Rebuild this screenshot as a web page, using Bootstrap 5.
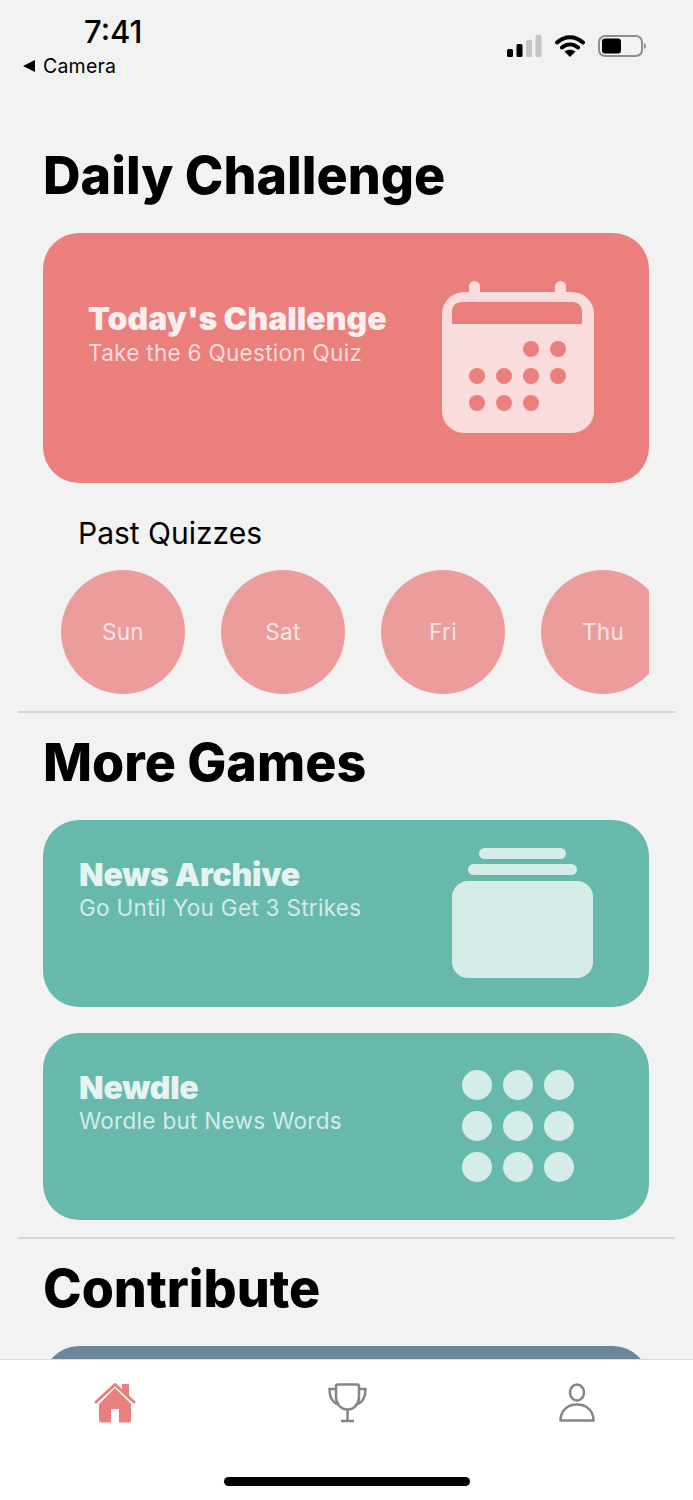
<!DOCTYPE html>
<html lang="en">
<head>
<meta charset="UTF-8">
<meta name="viewport" content="width=device-width, initial-scale=1.0">
<title>Daily Challenge</title>
<link href="https://cdn.jsdelivr.net/npm/bootstrap@5.3.0/dist/css/bootstrap.min.css" rel="stylesheet">
<style>
html, body { height: 100%; }
body { background: #f2f2f2; font-family: Inter, "Liberation Sans", sans-serif; color: #000; overflow: hidden; }
.phone { position: relative; width: 693px; height: 1500px; overflow: hidden; }
.status-bar { height: 100px; padding: 14px 47px 0 23px; }
.clock { font-size: 31px; line-height: 36px; font-weight: 500; margin-left: 61px; }
.back-link { font-size: 19.5px; line-height: 24px; margin-top: 4px; letter-spacing: .2px; }
.status-icons { margin-top: 21px; gap: 13px; }
.section-title { font-size: 52px; line-height: 60px; font-weight: 800; margin: 0 0 0 43px; }
.title-first { margin-top: 46px; margin-bottom: 27px; }
.title-next { margin-top: 20px; margin-bottom: 27px; }
.promo { margin: 0 44px 0 43px; border-radius: 36px; color: #fff; }
.promo-red { background: #ea7f7c; height: 250px; padding: 67px 55px 0 45px; }
.promo-teal { background: #67b9ae; height: 187px; padding: 36px 56px 0 36px; margin-bottom: 26px; }
.promo-blue { background: #6b8799; height: 100px; }
.promo-title { font-size: 32px; line-height: 38px; font-weight: 900; color: #fbeeee; }
.promo-teal .promo-title { color: #e6f4f1; letter-spacing: -.25px; }
.promo-sub { font-size: 22.5px; line-height: 28px; letter-spacing: .3px; }
.promo-red .promo-sub { color: #fbdcdc; margin-top: 1px; }
.promo-teal .promo-sub { color: #d3ece7; margin-top: 0; }
.icon-calendar { margin-top: -19px; }
.icon-archive { margin-top: -8px; }
.icon-grid { margin-top: 1px; margin-right: 18px; }
.past-label { font-size: 30px; line-height: 38px; margin: 31px 0 18px 78px; }
.circle-row { margin: 0 44px 0 61px; gap: 36px; overflow: hidden; }
.day-circle { flex: 0 0 124px; height: 124px; border-radius: 50%; background: #ec9c9b; color: #fbe6e6; font-size: 22.5px; letter-spacing: .3px; }
.rule { height: 2px; background: #d5d5d5; margin: 17px 18px 0; }
.tab-bar { position: absolute; left: 0; right: 0; top: 1359px; height: 141px; background: #fff; border-top: 1px solid #dcdcdc; }
.tab-icons { padding: 23px 98px 0 94px; }
.home-pill { position: absolute; left: 224px; top: 117px; width: 246px; height: 9px; border-radius: 5px; background: #000; }
</style>
</head>
<body>
<div class="phone">

  <div class="status-bar d-flex justify-content-between align-items-start">
    <div>
      <div class="clock">7:41</div>
      <div class="back-link d-flex align-items-center gap-2">
        <svg width="12" height="12" viewBox="0 0 12 12"><path d="M0 6 12 0v12z" fill="#000"/></svg>
        <span>Camera</span>
      </div>
    </div>
    <div class="status-icons d-flex align-items-center">
      <svg width="36" height="22" viewBox="0 0 36 22">
        <rect x="1" y="14" width="6" height="8" rx="1.5" fill="#000"/>
        <rect x="10.500" y="9" width="6" height="13" rx="1.5" fill="#000"/>
        <rect x="20" y="5" width="6" height="17" rx="1.5" fill="#c4c4c4"/>
        <rect x="29.500" y="0" width="6" height="22" rx="1.5" fill="#c4c4c4"/>
      </svg>
      <svg width="30" height="22" viewBox="0 0 30 22">
        <path d="M2 7.500C10 .5 20 .5 28 7.500M7 12.500C12 8.500 18 8.500 23 12.500" fill="none" stroke="#000" stroke-width="4" stroke-linecap="round"/>
        <path d="M15 22 9.500 16.500C12.500 14 17.500 14 20.500 16.500z" fill="#000"/>
      </svg>
      <svg width="48" height="22" viewBox="0 0 48 22">
        <rect x="1" y="1" width="43" height="20" rx="6" fill="none" stroke="#8d8d8d" stroke-width="2"/>
        <rect x="4" y="3.500" width="19" height="15" rx="3" fill="#000"/>
        <path d="M46 8c1.500.6 2 1.700 2 3s-.5 2.400-2 3z" fill="#8d8d8d"/>
      </svg>
    </div>
  </div>

  <h1 class="section-title title-first">Daily Challenge</h1>
  <div class="promo promo-red d-flex justify-content-between align-items-start">
    <div>
      <div class="promo-title">Today's Challenge</div>
      <div class="promo-sub">Take the 6 Question Quiz</div>
    </div>
    <svg width="152" height="152" viewBox="0 0 152 152" class="flex-shrink-0 icon-calendar">
      <g fill="#fadcdc">
        <rect x="0" y="11" width="152" height="141" rx="22"/>
        <rect x="27" y="0" width="11" height="18" rx="5.500"/>
        <rect x="113" y="0" width="11" height="18" rx="5.500"/>
      </g>
      <path fill="#ea7f7c" d="M21 21h110a9 9 0 0 1 9 9v12a1 1 0 0 1-1 1H11a1 1 0 0 1-1-1V30a9 9 0 0 1 9-9z"/>
      <g fill="#ea7f7c">
        <circle cx="89" cy="68" r="8"/><circle cx="116" cy="68" r="8"/>
        <circle cx="35" cy="95" r="8"/><circle cx="62" cy="95" r="8"/><circle cx="89" cy="95" r="8"/><circle cx="116" cy="95" r="8"/>
        <circle cx="35" cy="122" r="8"/><circle cx="62" cy="122" r="8"/><circle cx="89" cy="122" r="8"/>
      </g>
    </svg>
  </div>

  <div class="past-label">Past Quizzes</div>
  <div class="circle-row d-flex">
    <div class="day-circle d-flex align-items-center justify-content-center">Sun</div>
    <div class="day-circle d-flex align-items-center justify-content-center">Sat</div>
    <div class="day-circle d-flex align-items-center justify-content-center">Fri</div>
    <div class="day-circle d-flex align-items-center justify-content-center">Thu</div>
  </div>
  <div class="rule"></div>

  <h2 class="section-title title-next">More Games</h2>
  <div class="promo promo-teal d-flex justify-content-between align-items-start">
    <div>
      <div class="promo-title">News Archive</div>
      <div class="promo-sub">Go Until You Get 3 Strikes</div>
    </div>
    <svg width="141" height="130" viewBox="0 0 141 130" class="flex-shrink-0 icon-archive">
      <g fill="#d5ece8">
        <rect x="27" y="0" width="87" height="11" rx="5.500"/>
        <rect x="16" y="16" width="109" height="11" rx="5.500"/>
        <rect x="0" y="33" width="141" height="97" rx="16"/>
      </g>
    </svg>
  </div>
  <div class="promo promo-teal d-flex justify-content-between align-items-start mb-0">
    <div>
      <div class="promo-title">Newdle</div>
      <div class="promo-sub">Wordle but News Words</div>
    </div>
    <svg width="113" height="113" viewBox="0 0 113 113" class="flex-shrink-0 icon-grid">
      <g fill="#d5ece8">
        <circle cx="15" cy="15" r="15"/><circle cx="56" cy="15" r="15"/><circle cx="97" cy="15" r="15"/>
        <circle cx="15" cy="56" r="15"/><circle cx="56" cy="56" r="15"/><circle cx="97" cy="56" r="15"/>
        <circle cx="15" cy="97" r="15"/><circle cx="56" cy="97" r="15"/><circle cx="97" cy="97" r="15"/>
      </g>
    </svg>
  </div>
  <div class="rule"></div>

  <h2 class="section-title title-next">Contribute</h2>
  <div class="promo promo-blue"></div>

  <div class="tab-bar">
    <div class="tab-icons d-flex justify-content-between align-items-start">
      <svg width="42" height="40" viewBox="0 0 42 40">
        <path fill="#ea7f7c" d="M21 5 5 21v16a2.500 2.500 0 0 0 2.500 2.500H17V26h8v13.500h9.500A2.500 2.500 0 0 0 37 37V21z"/>
        <path fill="#ea7f7c" d="M28 1h7v14l-7-7z"/>
        <path d="M2 19 21 1.500 40 19" fill="none" stroke="#ea7f7c" stroke-width="3" stroke-linecap="round" stroke-linejoin="round"/>
      </svg>
      <svg width="40" height="40" viewBox="0 0 40 40" fill="none" stroke="#858585" stroke-width="2.500">
        <path d="M10 1.500h19a2 2 0 0 1 2 2V14c0 7-5 12.500-11.500 12.500S8 21 8 14V3.500a2 2 0 0 1 2-2z"/>
        <path d="M8 6H1.500c0 6 1 12 7.500 15M31 6h6.500c0 6-1 12-7.500 15"/>
        <path d="M19.500 26.500v11.500M13 38h13"/>
      </svg>
      <svg width="36" height="40" viewBox="0 0 36 40" fill="none" stroke="#858585" stroke-width="2.500">
        <ellipse cx="18" cy="9.500" rx="7" ry="8"/>
        <path d="M1.500 37.500C1.500 27 9 21.500 18 21.500S34.500 27 34.500 37.500z" stroke-linejoin="round"/>
      </svg>
    </div>
    <div class="home-pill"></div>
  </div>

</div>
<script src="https://cdn.jsdelivr.net/npm/bootstrap@5.3.0/dist/js/bootstrap.bundle.min.js"></script>
</body>
</html>
